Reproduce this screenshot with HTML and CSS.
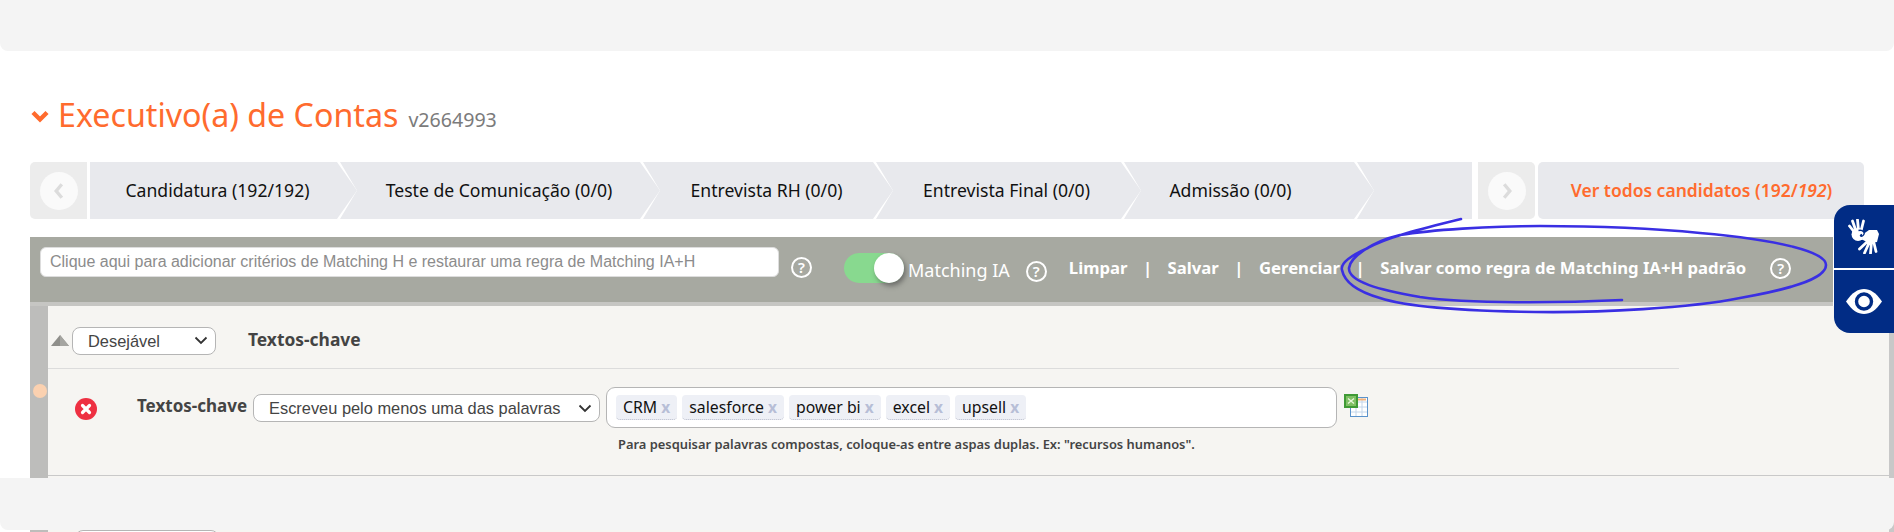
FILE: index.html
```html
<!DOCTYPE html>
<html lang="pt-BR">
<head>
<meta charset="utf-8">
<title>Executivo(a) de Contas</title>
<link rel="stylesheet" href="styles.css">
</head>
<body>
<div class="top-band"></div>
<main class="page">
  <header class="title-row">
    <svg class="title-chevron" viewBox="0 0 20 14"><path d="M3 2.5 10 9.5 17 2.5" fill="none" stroke="#ff6b2e" stroke-width="4.4"/></svg>
    <h1 class="title">Executivo(a) de Contas</h1>
    <span class="code">v2664993</span>
  </header>

  <nav class="steps">
    <button class="nav-btn nav-prev"><svg viewBox="0 0 10 16"><path d="M7.5 2 2.5 8 7.5 14" fill="none" stroke="#dcdcdc" stroke-width="3"/></svg></button>
    <div class="track">
      <a class="step step-1">Candidatura (192/192)</a>
      <a class="step step-2">Teste de Comunicação (0/0)</a>
      <a class="step step-3">Entrevista RH (0/0)</a>
      <a class="step step-4">Entrevista Final (0/0)</a>
      <a class="step step-5">Admissão (0/0)</a>
      <a class="step step-6"></a>
    </div>
    <button class="nav-btn nav-next"><svg viewBox="0 0 10 16"><path d="M2.5 2 7.5 8 2.5 14" fill="none" stroke="#dcdcdc" stroke-width="3"/></svg></button>
    <a class="all-link">Ver todos candidatos (192/<i>192</i>)</a>
  </nav>

  <section class="toolbar">
    <input class="criteria" type="text" placeholder="Clique aqui para adicionar critérios de Matching H e restaurar uma regra de Matching IA+H">
    <span class="help help-a">?</span>
    <span class="toggle"><span class="knob"></span></span>
    <span class="toggle-label">Matching IA</span>
    <span class="help help-b">?</span>
    <a class="tool tool-first">Limpar</a><span class="pipe">|</span>
    <a class="tool">Salvar</a><span class="pipe">|</span>
    <a class="tool">Gerenciar</a><span class="pipe">|</span>
    <a class="tool">Salvar como regra de Matching IA+H padrão</a>
    <span class="help help-c">?</span>
  </section>

  <section class="panel">
    <div class="panel-strip"><span class="dot"></span></div>
    <div class="panel-body">
      <div class="group-head">
        <svg class="caret" viewBox="0 0 18 11"><path d="M9 0 18 11H0Z" fill="#8f8f8b"/><path d="M9 0 18 11H9Z" fill="#a5a5a1"/></svg>
        <select class="select select-prio"><option>Desejável</option></select>
        <strong class="group-title">Textos-chave</strong>
      </div>
      <div class="rule">
        <div class="rule-main">
          <svg class="remove" viewBox="0 0 22 22"><circle cx="11" cy="11" r="11" fill="#ee3042"/><path d="M7.500 7.500 14.500 14.500M14.500 7.500 7.500 14.500" stroke="#fff" stroke-width="3.2" stroke-linecap="round"/></svg>
          <span class="rule-label">Textos-chave</span>
          <select class="select select-mode"><option>Escreveu pelo menos uma das palavras</option></select>
          <div class="tags">
            <span class="tag">CRM <b>x</b></span>
            <span class="tag">salesforce <b>x</b></span>
            <span class="tag">power bi <b>x</b></span>
            <span class="tag">excel <b>x</b></span>
            <span class="tag">upsell <b>x</b></span>
          </div>
          <svg class="excel" viewBox="0 0 24 23">
            <rect x="6.5" y="3.5" width="17" height="19" fill="#fff" stroke="#5b93cc"/>
            <path d="M7 8h16M7 13h16M7 18h16M12 4v18M18 4v18" stroke="#c4d6ea" stroke-width="1"/>
            <path d="M13 5.500h9" stroke="#f3b27a" stroke-width="2"/>
            <rect x="1" y="1" width="12" height="12" fill="#7fc064" stroke="#3f9a35" stroke-width="2"/>
            <path d="M4 4.500 10 9.500M10 4.500 4 9.500" stroke="#e8f6dd" stroke-width="1.300"/>
          </svg>
        </div>
        <p class="hint">Para pesquisar palavras compostas, coloque-as entre aspas duplas. Ex: "recursos humanos".</p>
      </div>
      <div class="group-next"><select class="select select-next"><option>Desejável</option></select></div>
    </div>
    <div class="panel-scroll"></div>
  </section>
</main>

<aside class="access">
  <button class="access-btn access-sign">
    <svg viewBox="0 0 32 35">
      <g stroke="#fff" stroke-linecap="round" fill="none">
        <path d="M7 14 1.500 7M8 12 4.500 2M10.500 11 9.500 .8M13 12 15.500 2" stroke-width="2.800"/>
        <path d="M20 22 11.500 30M21.500 23 16.500 34M23.500 23 22.500 34.500M25.500 22 28 32.500" stroke-width="2.800"/>
      </g>
      <ellipse cx="10" cy="15.500" rx="6.500" ry="6.500" fill="#fff"/>
      <path d="M8 21 15 21 13 15 9 14Z" fill="#fff"/>
      <path d="M14 16 21 11 29 11 31 15 29 23 21 24 15 21Z" fill="#fff"/>
      <path d="M10.500 11.500C15 10.500 18 14 15 16.500 13 18 11 16.500 14 15.500" fill="none" stroke="#012c85" stroke-width="1.400"/>
    </svg>
  </button>
  <button class="access-btn access-eye">
    <svg viewBox="0 0 36 25">
      <path d="M0 12.500C6 3.500 12 0 18 0S30 3.500 36 12.500C30 21.500 24 25 18 25S6 21.500 0 12.500Z" fill="#fff"/>
      <circle cx="18" cy="12.500" r="7.500" fill="none" stroke="#012c85" stroke-width="3.400"/>
    </svg>
  </button>
</aside>

<div class="bottom-band"></div>

<svg class="scribble" viewBox="0 0 1894 532">
  <path d="M1461 219C1420 229 1385 238 1368 248 1350 256 1340 263 1342 270 1344 280 1352 290 1380 298 1410 308 1470 311 1535 312 1600 313 1690 308 1740 298 1785 290 1826 280 1826 265 1826 252 1780 240 1700 233 1640 227 1590 226 1540 226 1490 226 1430 230 1400 235 1370 242 1350 258 1349 268 1348 282 1380 290 1420 297 1470 304 1560 303 1622 300" fill="none" stroke="#3a2fe3" stroke-width="2.600" stroke-linecap="round"/>
</svg>
</body>
</html>
```

FILE: styles.css
```css
* { box-sizing: border-box; }
html, body { margin: 0; height: 532px; overflow: hidden; background: #fff; }
body { font-family: "Noto Sans", "DejaVu Sans", sans-serif; color: #111; }

.top-band { height: 51px; background: #f4f4f4; border-radius: 0 0 8px 8px; }
.page { padding: 0 0 0 30px; }

.title-row { display: flex; align-items: baseline; height: 111px; padding-top: 44px; }
.title-chevron { width: 20px; height: 14px; align-self: flex-start; margin: 15px 8px 0 0; }
.title { margin: 0; font-size: 32.200px; font-weight: 400; color: #ff6b2e; line-height: 40px; white-space: nowrap; }
.code { margin-left: 10px; font-size: 19.600px; color: #7b7b7b; }

.steps { display: flex; height: 57px; width: 1834px; }
.nav-btn { width: 57px; height: 57px; padding: 0; border: 0; border-radius: 5px 0 0 5px; background: #ececec; display: flex; align-items: center; justify-content: center; }
.nav-btn svg { width: 38px; height: 38px; padding: 10px 13px; background: #fafafa; border-radius: 50%; }
.nav-next { border-radius: 0 5px 5px 0; margin-left: 3px; }
.track { display: flex; margin-left: 3px; width: 1385px; }
.step { height: 57px; display: flex; align-items: center; justify-content: center; font-size: 17.600px; white-space: nowrap; color: #111; background: #e8e9ed; clip-path: polygon(0 0, calc(100% - 20px) 0, 100% 50%, calc(100% - 20px) 100%, 0 100%, 17px 50%); margin-left: -17px; padding: 0 22px 2px 14px; }
.step-1 { width: 267px; margin-left: 0; padding-left: 10px; clip-path: polygon(0 0, calc(100% - 20px) 0, 100% 50%, calc(100% - 20px) 100%, 0 100%); }
.step-2 { width: 320px; padding-right: 16px; }
.step-3 { width: 250px; padding-right: 17px; }
.step-4 { width: 265px; padding-right: 18px; }
.step-5 { width: 250px; padding-right: 51px; }
.step-6 { width: 115px; clip-path: polygon(0 0, 100% 0, 100% 100%, 0 100%, 17px 50%); }
.all-link { width: 326px; margin-left: 3px; display: flex; align-items: center; justify-content: center; padding: 0 0 2px 1px; font-size: 17.500px; font-weight: 600; color: #ff6b2e; background: #e8e9ed; border-radius: 5px; white-space: pre; }

.toolbar { position: relative; display: flex; align-items: flex-start; width: 1803px; height: 69px; margin-top: 18px; padding: 0 10px; background: #a7a9a1; border-bottom: 4px solid #c6c6c3; color: #fff; }
.criteria { width: 739px; height: 30px; margin-top: 10px; padding: 0 9px; border: 1px solid #ddd; border-radius: 6px; background: #fff; font: 16px "Liberation Sans", sans-serif; }
.criteria::placeholder { color: #8c8c8c; opacity: 1; }
.help { display: flex; align-items: center; justify-content: center; width: 21px; height: 21px; border: 2px solid #fff; border-radius: 50%; font-size: 15px; font-weight: 600; line-height: 1; color: #fff; flex: none; }
.help-a { margin: 20px 0 0 12px; }
.toggle { position: relative; width: 60px; height: 30px; margin: 16px 0 0 32px; background: #88d98f; border-radius: 15px; flex: none; }
.knob { position: absolute; right: 0; top: 0; width: 30px; height: 30px; border-radius: 50%; background: #fff; box-shadow: 2px 3px 5px rgba(60,60,60,.55); }
.toggle-label { margin: 21px 0 0 4px; font-size: 18px; line-height: 24px; white-space: nowrap; }
.help-b { margin: 24px 0 0 16px; }
.tool { margin-top: 19px; font-size: 16.700px; line-height: 24px; font-weight: 700; white-space: nowrap; }
.tool-first { margin-left: 22px; }
.pipe { margin: 19px 15.500px 0; font-size: 16.700px; line-height: 24px; font-weight: 700; }
.help-c { margin: 21px 0 0 24px; }

.panel { display: flex; height: 226px; width: 1864px; overflow: hidden; }
.panel-strip { position: relative; width: 18px; background: #bdbdbb; flex: none; }
.dot { position: absolute; left: 3px; top: 78px; width: 14px; height: 14px; border-radius: 50%; background: #fbd1b0; }
.panel-body { flex: 1; background: #f6f5f2; overflow: hidden; }
.panel-scroll { width: 5px; background: #c8c8c8; }
.group-head { display: flex; align-items: center; width: 1631px; height: 63px; border-bottom: 1px solid #dcdcdc; padding-top: 7px; }
.caret { width: 18px; height: 11px; margin-left: 3px; flex: none; }
.select { appearance: none; height: 28px; padding: 0 24px 0 15px; border: 1px solid #b5b5b5; border-radius: 8px; background: #fff url("data:image/svg+xml,%3Csvg xmlns='http://www.w3.org/2000/svg' width='14' height='9'%3E%3Cpath d='M1.500 1.500 7 7 12.500 1.500' fill='none' stroke='%23333' stroke-width='1.800'/%3E%3C/svg%3E") no-repeat right 7px center; font: 16.400px "Liberation Sans", sans-serif; color: #444; }
.select-prio { width: 144px; margin-left: 3px; }
.group-title { margin: -4px 0 0 32px; font-size: 17.400px; color: #444; white-space: nowrap; }
.rule { height: 107px; border-bottom: 1px solid #c9c9c9; padding-top: 18px; }
.rule-main { display: flex; align-items: flex-start; }
.remove { width: 22px; height: 22px; margin: 11px 0 0 27px; flex: none; }
.rule-label { margin: 7px 0 0 40px; font-size: 17px; font-weight: 700; line-height: 24px; color: #444; white-space: nowrap; width: 116px; }
.select-mode { width: 347px; margin: 7px 0 0 0; }
.tags { display: flex; gap: 5px; width: 731px; height: 41px; margin-left: 6px; padding: 7px 9px; border: 1px solid #b5b5b5; border-radius: 9px; background: #fff; }
.tag { height: 25px; padding: 0 7px; background: #eef0f6; border-bottom: 1px dotted #b8bccb; border-radius: 4px; font-size: 15.800px; line-height: 24px; color: #111; white-space: nowrap; }
.tag b { margin-left: 0; font-weight: 700; color: #b7bed6; font-size: 15.500px; }
.excel { width: 24px; height: 23px; margin: 7px 0 0 7px; }
.hint { margin: 8px 0 0 570px; font-size: 12.900px; font-weight: 600; line-height: 16px; color: #444; white-space: nowrap; }
.group-next { padding: 54px 0 0 27px; }
.select-next { width: 144px; }

.access { position: fixed; top: 205px; right: 0; width: 60px; height: 128px; display: flex; flex-direction: column; gap: 2px; }
.access-btn { flex: 1; padding: 0; border: 0; background: #012c85; display: flex; align-items: center; justify-content: center; }
.access-sign { border-radius: 16px 0 0 0; }
.access-eye { border-radius: 0 0 0 16px; }
.access-sign svg { width: 32px; height: 35px; }
.access-eye svg { width: 36px; height: 25px; }

.bottom-band { position: fixed; left: 0; right: 0; bottom: 2px; height: 52px; background: #f4f4f4; border-radius: 0 0 8px 8px; }
.scribble { position: fixed; left: 0; top: 0; width: 1894px; height: 532px; pointer-events: none; }
```
